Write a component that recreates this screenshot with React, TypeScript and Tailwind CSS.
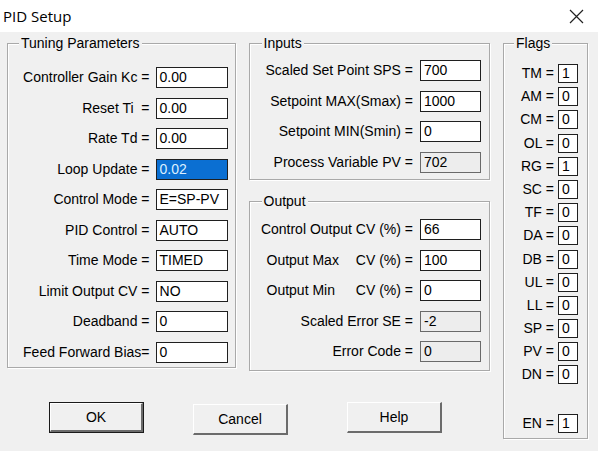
import React from 'react';

type Field = { label: string; value: string; selected?: boolean; readOnly?: boolean };

const tuning: Field[] = [
    { label: 'Controller Gain Kc =', value: '0.00' },
    { label: 'Reset Ti  =', value: '0.00' },
    { label: 'Rate Td =', value: '0.00' },
    { label: 'Loop Update =', value: '0.02', selected: true },
    { label: 'Control Mode =', value: 'E=SP-PV' },
    { label: 'PID Control =', value: 'AUTO' },
    { label: 'Time Mode =', value: 'TIMED' },
    { label: 'Limit Output CV =', value: 'NO' },
    { label: 'Deadband =', value: '0' },
    { label: 'Feed Forward Bias=', value: '0' },
];

const inputs: Field[] = [
    { label: 'Scaled Set Point SPS =', value: '700' },
    { label: 'Setpoint MAX(Smax) =', value: '1000' },
    { label: 'Setpoint MIN(Smin) =', value: '0' },
    { label: 'Process Variable PV =', value: '702', readOnly: true },
];

const flags: [string, string][] = [
    ['TM', '1'], ['AM', '0'], ['CM', '0'], ['OL', '0'], ['RG', '1'], ['SC', '0'], ['TF', '0'],
    ['DA', '0'], ['DB', '0'], ['UL', '0'], ['LL', '0'], ['SP', '0'], ['PV', '0'], ['DN', '0'],
];

function Group({ title, titleLeft, className, children }: { title: string; titleLeft: string; className: string; children: React.ReactNode }) {
    return (
        <div className={`relative border border-[#a9a9a9] shadow-[inset_1px_1px_0_#ffffff,1px_1px_0_#ffffff] ${className}`}>
            <span className={`absolute top-[-9px] ${titleLeft} bg-[#f0f0f0] px-[2px] leading-[16px]`}>{title}</span>
            {children}
        </div>
    );
}

function Edit({ value, selected, readOnly, w }: { value: string; selected?: boolean; readOnly?: boolean; w: string }) {
    const look = selected
        ? 'bg-[#0b6fd2] text-[#dcefff] border-[#1f1f1f]'
        : readOnly
            ? 'bg-[#ededed] border-[#6a6a6a] text-black'
            : 'bg-white border-[#1f1f1f]';
    return (
        <div className={`${w} h-[21px] border pl-[3px] leading-[19px] whitespace-nowrap overflow-hidden ${look}`}>{value}</div>
    );
}

function Button({ label, isDefault, className }: { label: string; isDefault?: boolean; className: string }) {
    return (
        <div className={`w-[95px] h-[31px] ${isDefault ? 'border border-[#1a1a1a]' : ''} ${className}`}>
            <div className="w-full h-full flex items-center justify-center bg-[#f0f0f0] border-t border-l border-t-white border-l-white border-b-2 border-r-2 border-b-[#6b6b6b] border-r-[#6b6b6b]">
                {label}
            </div>
        </div>
    );
}

export default function App() {
    return (
        <div className="w-[598px] h-[451px] bg-[#f0f0f0] text-[14px] text-black font-['Liberation_Sans',Arial,sans-serif] overflow-hidden">
            {/* title bar */}
            <div className="h-[32px] bg-white flex items-center justify-between pl-[3px] pr-[14px]">
                <span className="font-['Open_Sans',sans-serif] text-[15px] text-black">PID Setup</span>
                <svg width="15" height="15" viewBox="0 0 15 15" className="mt-[1px]">
                    <path d="M1 1 L14 14 M14 1 L1 14" stroke="#222" strokeWidth="1.2" fill="none" />
                </svg>
            </div>

            <div className="flex pl-[7px] pt-[11px] gap-[13px]">
                <div className="flex flex-col w-[483px]">
                    <div className="flex gap-[13px]">
                        <Group title="Tuning Parameters" titleLeft="left-[11px]" className="w-[229px] h-[325px]">
                            <div className="flex flex-col gap-[9.5px] pt-[23px] pr-[7px]">
                                {tuning.map(f => (
                                    <div key={f.label} className="flex items-center justify-end gap-[6px] h-[21px]">
                                        <span className="whitespace-pre">{f.label}</span>
                                        <Edit value={f.value} selected={f.selected} w="w-[72px]" />
                                    </div>
                                ))}
                            </div>
                        </Group>

                        <div className="flex flex-col w-[242px] gap-[21px]">
                            <Group title="Inputs" titleLeft="left-[12px]" className="h-[137px]">
                                <div className="flex flex-col gap-[9.5px] pt-[16px] pr-[8px]">
                                    {inputs.map(f => (
                                        <div key={f.label} className="flex items-center justify-end gap-[7px] h-[21px]">
                                            <span>{f.label}</span>
                                            <Edit value={f.value} readOnly={f.readOnly} w="w-[61px]" />
                                        </div>
                                    ))}
                                </div>
                            </Group>

                            <Group title="Output" titleLeft="left-[12px]" className="h-[170px]">
                                <div className="flex flex-col gap-[9.5px] pt-[17px] pr-[8px]">
                                    <div className="flex items-center justify-end gap-[7px] h-[21px]">
                                        <span>Control Output CV (%) =</span>
                                        <Edit value="66" w="w-[61px]" />
                                    </div>
                                    <div className="flex items-center gap-[7px] h-[21px] pl-[17px]">
                                        <span className="flex-1 flex justify-between"><span>Output Max</span><span>CV (%) =</span></span>
                                        <Edit value="100" w="w-[61px]" />
                                    </div>
                                    <div className="flex items-center gap-[7px] h-[21px] pl-[17px]">
                                        <span className="flex-1 flex justify-between"><span>Output Min</span><span>CV (%) =</span></span>
                                        <Edit value="0" w="w-[61px]" />
                                    </div>
                                    <div className="flex items-center justify-end gap-[7px] h-[21px]">
                                        <span>Scaled Error SE =</span>
                                        <Edit value="-2" readOnly w="w-[61px]" />
                                    </div>
                                    <div className="flex items-center justify-end gap-[7px] h-[21px]">
                                        <span>Error Code =</span>
                                        <Edit value="0" readOnly w="w-[61px]" />
                                    </div>
                                </div>
                            </Group>
                        </div>
                    </div>

                    <div className="flex items-start mt-[31px]">
                        <Button label="OK" isDefault className="ml-[42px]" />
                        <Button label="Cancel" className="ml-[49px] mt-[2px]" />
                        <Button label="Help" className="ml-[59px]" />
                    </div>
                </div>

                <Group title="Flags" titleLeft="left-[10px]" className="w-[85px] h-[396px]">
                    <div className="flex flex-col gap-[4.2px] pt-[20px] pr-[9px]">
                        {flags.map(([k, v]) => (
                            <div key={k} className="flex items-center justify-end gap-[4px] h-[19px]">
                                <span>{k} =</span>
                                <div className="w-[20px] h-[19px] border border-[#1f1f1f] bg-white pl-[3px] leading-[17px]">{v}</div>
                            </div>
                        ))}
                        <div className="flex items-center justify-end gap-[4px] h-[19px] mt-[25px]">
                            <span>EN =</span>
                            <div className="w-[20px] h-[19px] border border-[#1f1f1f] bg-white pl-[3px] leading-[17px]">1</div>
                        </div>
                    </div>
                </Group>
            </div>
        </div>
    );
}
